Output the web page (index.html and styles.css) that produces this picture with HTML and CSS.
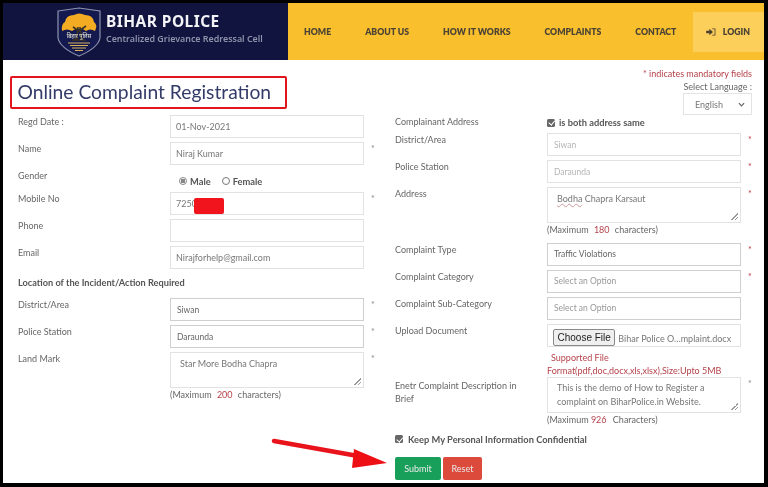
FILE: index.html
```html
<!DOCTYPE html>
<html lang="en">
<head>
<meta charset="utf-8">
<title>Online Complaint Registration</title>
<link rel="stylesheet" href="styles.css">
</head>
<body>
<div class="frame">
  <header class="topbar">
    <div class="brand">
      <svg class="crest" viewBox="0 0 44 50" aria-hidden="true">
        <path d="M1 4 L22 1 L43 4 L43 31 Q41 41 22 49 Q3 41 1 31 Z" fill="#141a50" stroke="#8d93ad" stroke-width="1.2"/>
        <path d="M5 24 Q4 17 8 15 Q9 8 17 8 Q22 5 28 8 Q36 8 37 15 Q41 18 38 24 Q33 21 29 24 Q25 21 23 22 Q19 21 15 24 Q10 21 5 24 Z" fill="#f2ab23"/>
        <path d="M21 20 L20 31 L17 33 L27 33 L24 31 L23 20 M22 24 L16 20 M22 24 L29 19" fill="none" stroke="#3a3424" stroke-width="1.6"/>
        <text x="22" y="31" class="crest-name" text-anchor="middle">बिहार पुलिस</text>
        <path d="M11 36 H33 M13 38.5 H31 M15 41 H29 M18 43.500 H26" stroke="#d8b35a" stroke-width="1" fill="none"/>
      </svg>
      <div class="brand-text">
        <div class="brand-name">BIHAR POLICE</div>
        <div class="brand-sub">Centralized Grievance Redressal Cell</div>
      </div>
    </div>
    <nav class="nav">
      <div class="nav-links">
        <a class="nav-link">HOME</a>
        <a class="nav-link">ABOUT US</a>
        <a class="nav-link">HOW IT WORKS</a>
        <a class="nav-link">COMPLAINTS</a>
        <a class="nav-link">CONTACT</a>
      </div>
      <a class="nav-login">
        <svg class="login-icon" viewBox="0 0 12 10" aria-hidden="true"><path d="M0 3.500 H4 V1 L8.500 5 L4 9 V6.500 H0 Z M7.500 0.500 H11.500 V9.500 H7.500 V8.500 H10.500 V1.500 H7.500 Z" fill="#4a4030"/></svg>
        LOGIN
      </a>
    </nav>
  </header>

  <main class="page">
    <div class="page-top">
      <h1 class="title">Online Complaint Registration</h1>
      <div class="lang">
        <div class="mandatory">* indicates mandatory fields</div>
        <div class="lang-label">Select Language :</div>
        <div class="lang-select">English<svg class="chev" viewBox="0 0 8 5" aria-hidden="true"><path d="M1 1 L4 4 L7 1" fill="none" stroke="#666" stroke-width="1.400"/></svg></div>
      </div>
    </div>

    <form class="form">
      <div class="col">
        <div class="row"><span class="label">Regd Date :</span><div class="box">01-Nov-2021</div></div>
        <div class="row"><span class="label">Name</span><div class="box">Niraj Kumar</div><span class="star">*</span></div>
        <div class="row row-gender"><span class="label">Gender</span>
          <div class="choices">
            <span class="radio on"></span><b class="strong">Male</b>
            <span class="radio"></span><b class="strong">Female</b>
          </div>
        </div>
        <div class="row"><span class="label">Mobile No</span><div class="box">7250<span class="redact"></span></div><span class="star">*</span></div>
        <div class="row"><span class="label">Phone</span><div class="box"></div></div>
        <div class="row"><span class="label">Email</span><div class="box">Nirajforhelp@gmail.com</div></div>
        <div class="section-head">Location of the Incident/Action Required</div>
        <div class="row"><span class="label">District/Area</span><div class="box box-dark">Siwan</div><span class="star">*</span></div>
        <div class="row"><span class="label">Police Station</span><div class="box box-dark">Daraunda</div><span class="star">*</span></div>
        <div class="row"><span class="label">Land Mark</span>
          <div><div class="box area">Star More Bodha Chapra<span class="grip"></span></div>
          <div class="hint">(Maximum <em>200</em> characters)</div></div>
          <span class="star">*</span>
        </div>
      </div>

      <div class="col">
        <div class="row row-same"><span class="label">Complainant Address</span>
          <div class="choices choices-same"><span class="check"></span><b class="strong">is both address same</b></div></div>
        <div class="row"><span class="label">District/Area</span><div class="box box-muted">Siwan</div><span class="star star-red">*</span></div>
        <div class="row"><span class="label">Police Station</span><div class="box box-muted">Daraunda</div><span class="star star-red">*</span></div>
        <div class="row"><span class="label">Address</span>
          <div><div class="box area"><span><u class="spell">Bodha</u> Chapra Karsaut</span><span class="grip"></span></div>
          <div class="hint hint-tall">(Maximum <em>180</em> characters)</div></div>
          <span class="star star-red">*</span>
        </div>
        <div class="row"><span class="label">Complaint Type</span><div class="box box-dark box-up">Traffic Violations</div><span class="star star-red">*</span></div>
        <div class="row"><span class="label">Complaint Category</span><div class="box box-dark box-up box-ph">Select an Option</div><span class="star star-red">*</span></div>
        <div class="row"><span class="label">Complaint Sub-Category</span><div class="box box-dark box-up box-ph">Select an Option</div></div>
        <div class="row row-upload"><span class="label">Upload Document</span>
          <div>
            <div class="box file"><span class="file-btn">Choose File</span><span class="file-name">Bihar Police O…mplaint.docx</span></div>
            <div class="supported"><span class="supported-first">Supported File</span><br>Format(pdf,doc,docx,xls,xlsx),Size:Upto 5MB</div>
          </div>
        </div>
        <div class="row"><span class="label label-wrap">Enetr Complaint Description in Brief</span>
          <div><div class="box area area-desc">This is the demo of How to Register a complaint on BiharPolice.in Website.<span class="grip"></span></div>
          <div class="hint">(Maximum <em class="tight">926</em> Characters)</div></div>
          <span class="star">*</span>
        </div>
        <div class="confidential"><span class="check"></span><b class="strong">Keep My Personal Information Confidential</b></div>
        <div class="actions">
          <button type="button" class="btn btn-submit">Submit</button>
          <button type="button" class="btn btn-reset">Reset</button>
        </div>
      </div>
    </form>
  </main>

  <svg class="arrow" viewBox="0 0 768 487" aria-hidden="true">
    <path d="M274 441 L358 456" stroke="#e8131b" stroke-width="4.500" stroke-linecap="round" fill="none"/>
    <path d="M354 449 L387 463 L352 468 Z" fill="#ee0f14"/>
  </svg>
</div>
</body>
</html>
```

FILE: styles.css
```css
* { box-sizing: border-box; }

html, body {
  margin: 0;
  height: 100%;
  background: #000;
  overflow: hidden;
}

.frame {
  position: relative;
  width: 768px;
  height: 487px;
  padding: 3px 4px 4px 3px;
  font-family: Lato, "Noto Sans", sans-serif;
  font-size: 9px;
  color: #666;
  filter: blur(0.35px);
}

.topbar {
  display: flex;
  height: 57px;
}

.brand {
  flex: none;
  width: 285px;
  background: #10143f;
  display: flex;
  align-items: center;
  padding-left: 54px;
  gap: 5px;
}

.crest { width: 44px; height: 50px; flex: none; }

.crest-name {
  font-family: "Noto Sans", sans-serif;
  font-size: 5.5px;
  fill: #f3f0e0;
}

.brand-text { margin-top: -8px; }

.brand-name {
  font-family: "Noto Sans", sans-serif;
  font-weight: 700;
  font-size: 15.500px;
  line-height: 18px;
  color: #f3f3f6;
  letter-spacing: 0.45px;
}

.brand-sub {
  font-family: "Noto Sans", sans-serif;
  font-weight: 600;
  font-size: 8.900px;
  line-height: 11px;
  margin-top: 3px;
  color: #8f93ab;
  white-space: nowrap;
}

.nav {
  flex: 1;
  min-width: 0;
  background: #f9bf2d;
  display: flex;
  align-items: center;
  padding-left: 16px;
  font-family: Lato, sans-serif;
  font-weight: 800;
  font-size: 8.700px;
  color: #4d4434;
  white-space: nowrap;
}

.nav-links {
  flex: 1;
  min-width: 0;
  display: flex;
  gap: 34px;
}

.nav-login {
  flex: none;
  width: 71px;
  height: 40px;
  background: #fbcf5a;
  display: flex;
  align-items: center;
  justify-content: flex-end;
  gap: 7px;
  padding-right: 14px;
}

.login-icon { width: 10px; height: 8px; }

.page {
  background: #fff;
  height: 423px;
  padding-left: 15px;
}

.page-top {
  display: flex;
  justify-content: space-between;
  height: 55px;
  padding-right: 12px;
}

.title {
  margin: 16px 0 0 -8px;
  width: 277px;
  height: 33px;
  padding: 0 0 0 5.500px;
  border: 2.500px solid #e2141d;
  border-radius: 2px;
  font-family: Lato, sans-serif;
  font-weight: 400;
  font-size: 19.250px;
  line-height: 28px;
  color: #333c68;
  white-space: nowrap;
}

.lang {
  display: flex;
  flex-direction: column;
  align-items: flex-end;
  padding-top: 7px;
}

.mandatory { color: #b4424a; line-height: 13px; }
.lang-label { line-height: 13px; }

.lang-select {
  width: 69px;
  height: 22px;
  border: 1px solid #e3e3e3;
  display: flex;
  align-items: center;
  justify-content: space-between;
  padding: 0 6px 0 11px;
  color: #777;
}

.chev { width: 7px; height: 5px; }

.form {
  display: grid;
  grid-template-columns: 377px 1fr;
}

.col { display: flex; flex-direction: column; }

.row {
  display: grid;
  grid-template-columns: 152px 194px 20px;
  margin-bottom: 4px;
}

.label { line-height: 13px; }
.label-wrap { padding-right: 20px; padding-top: 2px; }

.box {
  position: relative;
  height: 23px;
  border: 1px solid #e2e2e2;
  padding: 0 5px;
  display: flex;
  align-items: center;
  color: #777;
  font-size: 9px;
}

.box-dark { border-color: #cfcfcf; color: #666; padding-left: 6px; font-size: 8.500px; }
.box-muted { color: #b5b5b5; padding-left: 6px; font-size: 8.500px; }
.box-up { padding-bottom: 2px; }
.box-ph { color: #999; }

.redact {
  position: absolute;
  left: 23px;
  top: 5px;
  width: 30px;
  height: 16px;
  background: #f2141c;
  border-radius: 2px;
  filter: blur(0.7px);
}

.area {
  height: 36px;
  align-items: flex-start;
  padding: 4px 9px;
  line-height: 13px;
}

.area-desc { padding-top: 3px; padding-right: 20px; line-height: 14px; }

.grip {
  position: absolute;
  right: 2px;
  bottom: 2px;
  width: 7px;
  height: 7px;
  background: linear-gradient(135deg, transparent 50%, #999 50%, #999 60%, transparent 60%, transparent 75%, #999 75%, #999 85%, transparent 85%);
}

.spell { text-decoration: underline wavy #c99 0.5px; }

.star { padding: 0 0 0 7px; color: #8a8a8a; line-height: 13px; }
.star-red { color: #c0393f; }

.row-gender { height: 19px; }

.choices {
  display: flex;
  align-items: center;
  gap: 3px;
  padding: 5px 0 0 9px;
  height: 19px;
}

.row-same { height: 14px; }
.choices-same { padding: 1px 0 0 0; height: 14px; gap: 4px; }

.strong { font-weight: 700; color: #555; font-size: 9.300px; }

.radio {
  width: 8px;
  height: 8px;
  border: 1px solid #777;
  border-radius: 50%;
  background: #fff;
  margin-left: 8px;
}

.radio:first-child { margin-left: 0; }
.radio.on { border-color: #888; background: radial-gradient(circle, #888 50%, #fff 55%); }

.check {
  width: 8px;
  height: 8px;
  border-radius: 1.500px;
  background: #666;
  display: inline-block;
  position: relative;
  flex: none;
}

.check::after {
  content: "";
  position: absolute;
  left: 2.500px;
  top: 0.500px;
  width: 2.500px;
  height: 4.500px;
  border: solid #fff;
  border-width: 0 1px 1px 0;
  transform: rotate(40deg);
}

.section-head {
  height: 25px;
  font-weight: 700;
  color: #555;
  font-size: 9.200px;
  line-height: 12px;
  padding-top: 4px;
}

.hint { line-height: 13px; color: #666; }
.hint-tall { height: 16px; }
.hint em { font-style: normal; color: #b4424a; padding: 0 3px; }
.hint em.tight { padding: 0 4px 0 0; }

.file { padding: 0 0 0 5px; gap: 3px; align-items: flex-end; overflow: hidden; }

.file-btn {
  font-family: "Liberation Sans", sans-serif;
  font-size: 10px;
  line-height: 13px;
  background: #efefef;
  border: 1px solid #8a8a8a;
  border-radius: 2px;
  padding: 1px 3.500px;
  color: #222;
  flex: none;
}

.file-name { font-size: 9px; line-height: 15px; color: #777; white-space: nowrap; }

.row-upload { margin-bottom: 0; }

.supported {
  color: #b4424a;
  line-height: 13px;
  padding-top: 4px;
  white-space: nowrap;
  height: 30px;
}

.supported-first { padding-left: 4px; }

.confidential {
  display: flex;
  align-items: center;
  gap: 5px;
  margin-top: 2px;
  height: 14px;
}

.actions {
  display: flex;
  gap: 2px;
  margin-top: 11px;
}

.btn {
  height: 23px;
  border: 0;
  border-radius: 2px;
  font-family: Lato, sans-serif;
  font-size: 9px;
  color: #e9e9e9;
}

.btn-submit { width: 46px; background: #18a05a; }
.btn-reset { width: 39px; background: #dc4a3c; }

.arrow {
  position: absolute;
  left: 0;
  top: 0;
  width: 768px;
  height: 487px;
  pointer-events: none;
}
```
